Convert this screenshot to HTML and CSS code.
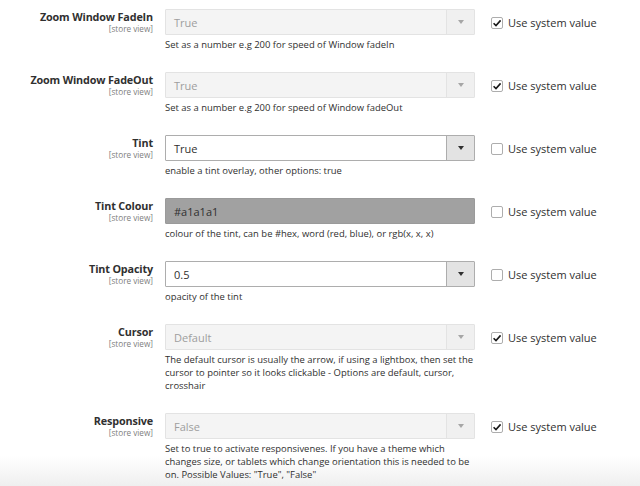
FILE: index.html
```html
<!DOCTYPE html>
<html>
<head>
<meta charset="utf-8">
<link rel="stylesheet" href="styles.css">
</head>
<body>
<div class="page">
  <div class="row">
    <div class="label"><div class="title">Zoom Window FadeIn</div><div class="scope">[store view]</div></div>
    <div class="field">
      <div class="select disabled"><span class="val">True</span><span class="btn"><span class="arrow"></span></span></div>
      <div class="note">Set as a number e.g 200 for speed of Window fadeIn</div>
    </div>
    <label class="sys"><span class="cb checked"><svg viewBox="0 0 12 12" width="12" height="12"><path d="M2.6 6.2 L5 8.6 L9.6 3.4" fill="none" stroke="#1a1a1a" stroke-width="1.6"/></svg></span>Use system value</label>
  </div>
  <div class="row">
    <div class="label"><div class="title">Zoom Window FadeOut</div><div class="scope">[store view]</div></div>
    <div class="field">
      <div class="select disabled"><span class="val">True</span><span class="btn"><span class="arrow"></span></span></div>
      <div class="note">Set as a number e.g 200 for speed of Window fadeOut</div>
    </div>
    <label class="sys"><span class="cb checked"><svg viewBox="0 0 12 12" width="12" height="12"><path d="M2.6 6.2 L5 8.6 L9.6 3.4" fill="none" stroke="#1a1a1a" stroke-width="1.6"/></svg></span>Use system value</label>
  </div>
  <div class="row">
    <div class="label"><div class="title">Tint</div><div class="scope">[store view]</div></div>
    <div class="field">
      <div class="select"><span class="val">True</span><span class="btn"><span class="arrow"></span></span></div>
      <div class="note">enable a tint overlay, other options: true</div>
    </div>
    <label class="sys"><span class="cb"></span>Use system value</label>
  </div>
  <div class="row">
    <div class="label"><div class="title">Tint Colour</div><div class="scope">[store view]</div></div>
    <div class="field">
      <div class="input colour"><span class="val">#a1a1a1</span></div>
      <div class="note">colour of the tint, can be #hex, word (red, blue), or rgb(x, x, x)</div>
    </div>
    <label class="sys"><span class="cb"></span>Use system value</label>
  </div>
  <div class="row">
    <div class="label"><div class="title">Tint Opacity</div><div class="scope">[store view]</div></div>
    <div class="field">
      <div class="select"><span class="val">0.5</span><span class="btn"><span class="arrow"></span></span></div>
      <div class="note">opacity of the tint</div>
    </div>
    <label class="sys"><span class="cb"></span>Use system value</label>
  </div>
  <div class="row">
    <div class="label"><div class="title">Cursor</div><div class="scope">[store view]</div></div>
    <div class="field">
      <div class="select disabled"><span class="val">Default</span><span class="btn"><span class="arrow"></span></span></div>
      <div class="note">The default cursor is usually the arrow, if using a lightbox, then set the cursor to pointer so it looks clickable - Options are default, cursor, crosshair</div>
    </div>
    <label class="sys"><span class="cb checked"><svg viewBox="0 0 12 12" width="12" height="12"><path d="M2.6 6.2 L5 8.6 L9.6 3.4" fill="none" stroke="#1a1a1a" stroke-width="1.6"/></svg></span>Use system value</label>
  </div>
  <div class="row">
    <div class="label"><div class="title">Responsive</div><div class="scope">[store view]</div></div>
    <div class="field">
      <div class="select disabled"><span class="val">False</span><span class="btn"><span class="arrow"></span></span></div>
      <div class="note">Set to true to activate responsivenes. If you have a theme which changes size, or tablets which change orientation this is needed to be on. Possible Values: "True", "False"</div>
    </div>
    <label class="sys"><span class="cb checked"><svg viewBox="0 0 12 12" width="12" height="12"><path d="M2.6 6.2 L5 8.6 L9.6 3.4" fill="none" stroke="#1a1a1a" stroke-width="1.6"/></svg></span>Use system value</label>
  </div>
</div>
</body>
</html>
```
FILE: styles.css
```css
html, body {
  margin: 0;
  padding: 0;
  height: 486px;
  overflow: hidden;
}
body {
  background: linear-gradient(to bottom, #ffffff 0, #ffffff 456px, #efefef 486px);
  font-family: "Open Sans", "DejaVu Sans", sans-serif;
  color: #303030;
}
.page {
  padding-top: 9px;
}
.row {
  display: grid;
  grid-template-columns: 153px 310px 1fr;
  column-gap: 12px;
  align-items: start;
  padding-bottom: 21px;
}
.label {
  text-align: right;
  padding-top: 1px;
}
.title {
  font-size: 10.8px;
  font-weight: 700;
  line-height: 14px;
  letter-spacing: -0.15px;
}
.scope {
  font-size: 8.2px;
  line-height: 10px;
  color: #808080;
}
.select, .input {
  box-sizing: border-box;
  height: 26px;
  border: 1px solid #adadad;
  border-radius: 1px;
  background: #fff;
  display: flex;
  align-items: center;
  font-size: 11px;
}
.val {
  flex: 1;
  padding-left: 8px;
}
.btn {
  width: 27px;
  align-self: stretch;
  border-left: 1px solid #adadad;
  background: #e3e3e3;
  display: flex;
  align-items: center;
  justify-content: center;
}
.arrow {
  width: 0;
  height: 0;
  border-left: 3.5px solid transparent;
  border-right: 3.5px solid transparent;
  border-top: 4px solid #303030;
}
.select.disabled {
  background: #f4f4f4;
  border-color: #e3e3e3;
  color: #9e9e9e;
}
.select.disabled .btn {
  background: #f0f0f0;
  border-left-color: #e3e3e3;
}
.select.disabled .arrow {
  border-top-color: #a6a6a6;
}
.input.colour {
  background: #a1a1a1;
  border-color: #9a9a9a;
  color: #303030;
}
.note {
  margin-top: 3px;
  font-size: 9.45px;
  line-height: 13px;
}
.sys {
  display: flex;
  align-items: center;
  margin-left: 4px;
  height: 26px;
  font-size: 11px;
  color: #303030;
}
.cb {
  box-sizing: border-box;
  width: 12px;
  height: 12px;
  border: 1px solid #adadad;
  border-radius: 2px;
  background: #fff;
  margin-right: 5px;
  margin-top: 2px;
  display: flex;
  align-items: center;
  justify-content: center;
  overflow: hidden;
}
.cb svg {
  display: block;
  flex: none;
}
```
